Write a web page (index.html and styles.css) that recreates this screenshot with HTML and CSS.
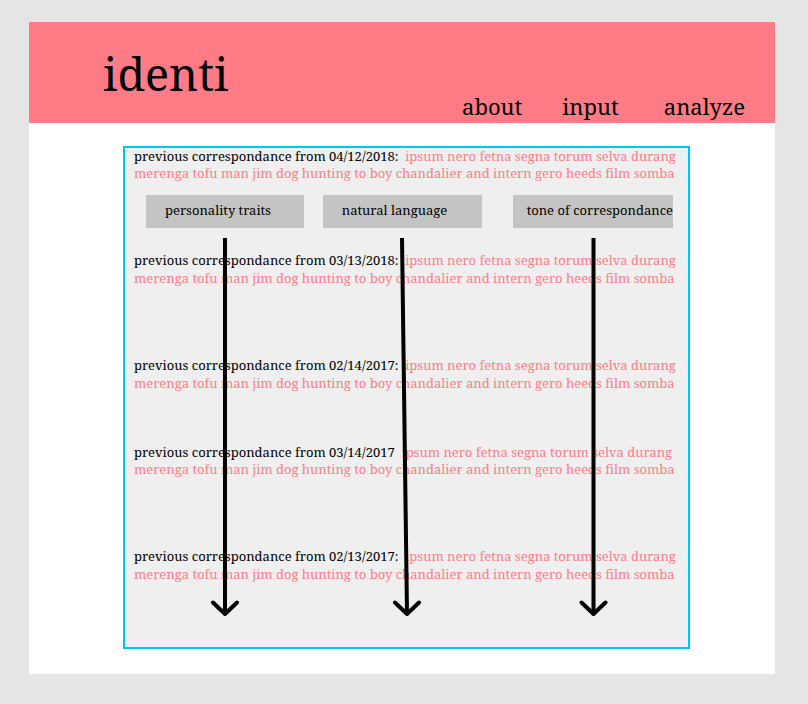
FILE: index.html
```html
<!DOCTYPE html>
<html lang="en">
<head>
<meta charset="utf-8">
<title>identi</title>
<link rel="stylesheet" href="styles.css">
</head>
<body>
<div class="page">
  <header class="banner">
    <h1 class="brand">identi</h1>
    <nav class="menu">
      <a href="#">about</a>
      <a class="menu-input" href="#">input</a>
      <a href="#">analyze</a>
    </nav>
  </header>
  <main class="panel">
    <article class="entry tight">
      <p>previous correspondance from 04/12/2018: <span class="quote">&nbsp;ipsum nero fetna segna torum selva durang</span></p>
      <p class="quote">merenga tofu man jim dog hunting to boy chandalier and intern gero heeds film somba</p>
    </article>
    <div class="filters">
      <button type="button">personality traits</button>
      <button type="button">natural language</button>
      <button type="button" class="tone">tone of correspondance</button>
    </div>
    <article class="entry">
      <p>previous correspondance from 03/13/2018: <span class="quote">&nbsp;ipsum nero fetna segna torum selva durang</span></p>
      <p class="quote">merenga tofu man jim dog hunting to boy chandalier and intern gero heeds film somba</p>
    </article>
    <article class="entry far">
      <p>previous correspondance from 02/14/2017: <span class="quote">&nbsp;ipsum nero fetna segna torum selva durang</span></p>
      <p class="quote">merenga tofu man jim dog hunting to boy chandalier and intern gero heeds film somba</p>
    </article>
    <article class="entry near tight">
      <p>previous correspondance from 03/14/2017 <span class="quote">&nbsp;ipsum nero fetna segna torum selva durang</span></p>
      <p class="quote">merenga tofu man jim dog hunting to boy chandalier and intern gero heeds film somba</p>
    </article>
    <article class="entry far">
      <p>previous correspondance from 02/13/2017: <span class="quote">&nbsp;ipsum nero fetna segna torum selva durang</span></p>
      <p class="quote">merenga tofu man jim dog hunting to boy chandalier and intern gero heeds film somba</p>
    </article>
    <svg class="arrows" viewBox="0 0 563 499" aria-hidden="true">
      <g fill="none" stroke="#000" stroke-width="4">
        <path d="M100 90V466M277 90L282 466M468.500 90V466"/>
        <path stroke-linecap="round" stroke-linejoin="round" d="M88 454.500L100 466L112 454.500M270 454.500L282 466L294 454.500M456.500 454.500L468.500 466L480.500 454.500"/>
      </g>
    </svg>
  </main>
</div>
</body>
</html>
```
FILE: styles.css
```css
* {
  box-sizing: border-box;
}

body {
  margin: 0;
  padding: 22px 33px 30px 29px;
  background: #e5e5e5;
  color: #000;
  font-family: "Roboto Slab", "Noto Serif", "DejaVu Serif", serif;
  font-size: 13px;
  line-height: 18px;
}

.page {
  padding-bottom: 25px;
  background: #fff;
}

.banner {
  display: flex;
  justify-content: space-between;
  padding: 21px 30px 1px 74px;
  background: #ff7c87;
}

.brand {
  margin: 0;
  font-size: 45px;
  font-weight: 400;
  line-height: 62px;
}

.menu {
  display: flex;
  gap: 40px;
  padding-top: 47px;
  font-size: 22px;
  line-height: 32px;
}

.menu a {
  color: inherit;
  text-decoration: none;
}

.menu-input {
  margin-right: 5px;
}

.panel {
  position: relative;
  margin: 23px 85px 0 94px;
  padding-bottom: 64px;
  border: 2px solid #00c4ff;
  background: #efefef;
}

.entry {
  padding-left: 9px;
  white-space: nowrap;
}

.entry p {
  margin: 0;
}

.tight {
  line-height: 17px;
}

.quote {
  color: #ff7c87;
}

.far {
  margin-top: 69px;
}

.near {
  margin-top: 52px;
}

.filters {
  display: grid;
  grid-template-columns: 158fr 159fr 172fr;
  column-gap: 19px;
  margin: 13px 15px 23px 21px;
}

.filters button {
  height: 33px;
  padding: 0 0 3px 19px;
  border: 0;
  background: #c4c4c4;
  color: inherit;
  font: inherit;
  text-align: left;
  white-space: nowrap;
}

.filters .tone {
  margin-left: 12px;
  padding-left: 14px;
}

.arrows {
  position: absolute;
  top: 0;
  left: 0;
  width: 100%;
  height: 100%;
  pointer-events: none;
}
```
